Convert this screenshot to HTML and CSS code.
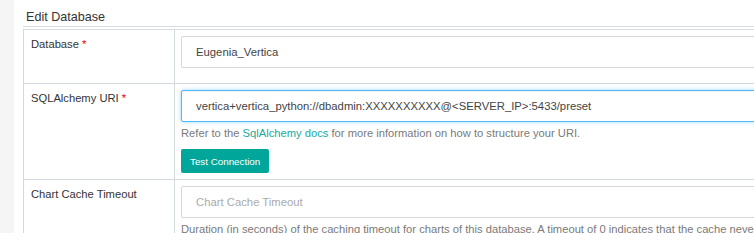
FILE: index.html
```html
<!DOCTYPE html>
<html lang="en">
<head>
    <meta charset="UTF-8">
    <meta name="viewport" content="width=device-width, initial-scale=1.0">
    <title>Edit Database</title>
    <link rel="stylesheet" href="styles.css">
</head>
<body>
    <div class="page">
        <div class="sidebar"></div>
        <div class="content">
            <h4 class="panel-title">Edit Database</h4>
            <table class="form-table">
                <tr>
                    <td class="label-cell">
                        <label>Database <span class="req">*</span></label>
                    </td>
                    <td class="control-cell">
                        <input class="form-control first" type="text" value="Eugenia_Vertica">
                    </td>
                </tr>
                <tr>
                    <td class="label-cell">
                        <label>SQLAlchemy URI <span class="req">*</span></label>
                    </td>
                    <td class="control-cell">
                        <input class="form-control focused" type="text" value="vertica+vertica_python://dbadmin:XXXXXXXXXX@<SERVER_IP>:5433/preset">
                        <p class="help-block">Refer to the <a href="#">SqlAlchemy docs</a> for more information on how to structure your URI.</p>
                        <button class="btn-test">Test Connection</button>
                    </td>
                </tr>
                <tr>
                    <td class="label-cell">
                        <label>Chart Cache Timeout</label>
                    </td>
                    <td class="control-cell">
                        <input class="form-control" type="text" placeholder="Chart Cache Timeout">
                        <p class="help-block">Duration (in seconds) of the caching timeout for charts of this database. A timeout of 0 indicates that the cache never expires.</p>
                    </td>
                </tr>
            </table>
        </div>
    </div>
</body>
</html>
```

FILE: styles.css
```css
body {
    margin: 0;
    overflow: hidden;
    background: white;
    font-family: "Liberation Sans", Arial, sans-serif;
    color: #333;
}
.page {
    display: flex;
    height: 233px;
}
.sidebar {
    width: 14px;
    flex: none;
    background: #f5f5f5;
}
.content {
    flex: 1;
    padding-left: 9px;
    overflow: hidden;
}
.panel-title {
    margin: 0 0 2px 0;
    padding: 8px 0 0 3px;
    font-size: 12.6px;
    font-weight: normal;
    line-height: 18px;
    border-bottom: 1px solid #d3dbe0;
}
.form-table {
    border-collapse: collapse;
    width: 1000px;
}
.form-table td {
    border: 1px solid #d3dbe0;
    vertical-align: top;
    padding: 6px;
}
.label-cell {
    width: 138px;
    font-size: 11.2px;
    line-height: 16px;
}
.label-cell label {
    padding-left: 1px;
}
.req {
    color: #e00;
}
.form-control {
    display: block;
    box-sizing: border-box;
    width: 100%;
    height: 32px;
    margin: 0;
    padding: 0 14px;
    border: 1px solid #d7d7d7;
    border-radius: 2px;
    font-family: "Liberation Sans", Arial, sans-serif;
    font-size: 11.3px;
    color: #444;
    outline: none;
}
.form-control::placeholder {
    color: #aaa;
}
.form-control.first {
    margin-bottom: 9px;
}
.form-control.focused {
    border-color: #4fb8f6;
    box-shadow: 0 0 4px rgba(79, 184, 246, 0.55), inset 0 1px 2px rgba(0, 0, 0, 0.06);
}
.help-block {
    margin: 3px 0 0 0;
    font-size: 11.2px;
    line-height: 16px;
    color: #7a7a7a;
    white-space: nowrap;
}
.help-block a {
    color: #1aa99c;
    text-decoration: none;
}
.btn-test {
    display: block;
    margin-top: 8px;
    height: 24px;
    padding: 0 9px;
    border: none;
    border-radius: 2px;
    background: #00a699;
    color: white;
    font-family: "Liberation Sans", Arial, sans-serif;
    font-size: 9.8px;
}
```
